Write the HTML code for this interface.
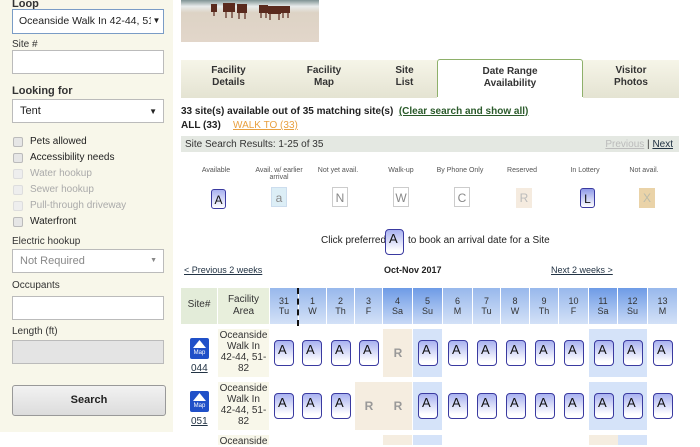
<!DOCTYPE html>
<html><head><meta charset="utf-8"><style>
*{box-sizing:border-box;margin:0;padding:0}
body{width:700px;height:440px;overflow:hidden;background:#fff;font-family:"Liberation Sans",Arial,sans-serif;font-size:11px;color:#222;position:relative}
.a{position:absolute}
#left{left:0;top:0;width:173px;height:432px;background:#f8f7ea}
.lbl{position:absolute;left:12px;font-size:10px;color:#333}
.inp{position:absolute;left:12px;width:152px;height:24px;background:#fff;border:1px solid #bbb;white-space:nowrap;overflow:hidden}
.cb{position:absolute;left:13px;width:10px;height:10px;border:1px solid #bbb;background:#e6e6e6;border-radius:2px}
.ct{position:absolute;left:30px;font-size:10px}
.tab{position:absolute;top:60px;height:38px;background:linear-gradient(#f6f5e8,#e4e3d2);text-align:center;font-weight:bold;font-size:10px;color:#333;line-height:12px;padding-top:5px}
.hd{position:absolute;top:288px;height:36px;text-align:center;font-size:9px;line-height:10px;padding-top:8px;color:#333;background:linear-gradient(#98b8ec,#d3e1f7)}
.we{background:linear-gradient(#6e9be6,#c8d9f6)}
.btn{position:absolute;width:20px;height:26px;border:1px solid #3a3aa0;border-radius:4px;background:linear-gradient(#a9b2f0,#fff 85%);font-size:13px;padding-left:3px;line-height:17px;color:#111}
.R{position:absolute;width:20px;text-align:center;color:#999;font-weight:bold;font-size:12px}
.bg{position:absolute}
.lg{position:absolute;font-size:7px;color:#555;text-align:center;width:60px}
.lb{position:absolute;width:16px;height:20px;text-align:center;line-height:20px;font-size:12px;color:#888}
</style></head><body>
<div id="left" class="a">
<div class="lbl" style="top:-2px;font-weight:bold;font-size:11px">Loop</div>
<div class="inp" style="top:9px;height:25px;border-color:#7a9cc6;font-size:10.5px;padding:5px 14px 0 6px">Oceanside Walk In 42-44, 51<span style="position:absolute;right:1px;top:3px;width:11px;height:16px;background:#fff;font-size:8px;line-height:16px;text-align:center">▼</span></div>
<div class="lbl" style="top:39px">Site #</div>
<div class="inp" style="top:50px"></div>
<div class="lbl" style="top:85px;font-weight:bold;font-size:11px">Looking for</div>
<div class="inp" style="top:99px;font-size:11px;padding:5px 0 0 7px">Tent<span style="position:absolute;right:6px;top:7px;font-size:8px">▼</span></div>
<div class="cb" style="top:137px"></div><div class="ct" style="top:136px">Pets allowed</div>
<div class="cb" style="top:153px"></div><div class="ct" style="top:152px">Accessibility needs</div>
<div class="cb" style="top:169px;background:#eee;border-color:#ddd"></div><div class="ct" style="top:168px;color:#aaa">Water hookup</div>
<div class="cb" style="top:185px;background:#eee;border-color:#ddd"></div><div class="ct" style="top:184px;color:#aaa">Sewer hookup</div>
<div class="cb" style="top:201px;background:#eee;border-color:#ddd"></div><div class="ct" style="top:200px;color:#aaa">Pull-through driveway</div>
<div class="cb" style="top:217px"></div><div class="ct" style="top:216px">Waterfront</div>
<div class="lbl" style="top:236px">Electric hookup</div>
<div class="inp" style="top:249px;font-size:11px;color:#888;padding:5px 0 0 7px">Not Required<span style="position:absolute;right:6px;top:7px;font-size:7px">▼</span></div>
<div class="lbl" style="top:280px">Occupants</div>
<div class="inp" style="top:296px"></div>
<div class="lbl" style="top:326px">Length (ft)</div>
<div class="inp" style="top:340px;background:#e4e4e4"></div>
<div class="inp" style="top:385px;height:31px;width:154px;border-radius:3px;border-color:#999;background:linear-gradient(#f2f2f2,#dcdcdc);text-align:center;font-weight:bold;font-size:11px;line-height:29px">Search</div>
</div>

<svg class="a" style="left:181px;top:0" width="138" height="42"><defs><linearGradient id="s" x1="0" y1="0" x2="0" y2="1"><stop offset="0" stop-color="#7e9293"/><stop offset=".15" stop-color="#e8ecec"/><stop offset=".3" stop-color="#ddd3c5"/><stop offset="1" stop-color="#e2d6ca"/></linearGradient></defs><rect width="138" height="42" fill="url(#s)"/>
<g fill="#5a2a1e"><rect x="30" y="4" width="6" height="8"/><rect x="42" y="3" width="12" height="9"/><rect x="56" y="4" width="10" height="9"/><rect x="78" y="5" width="9" height="8"/><rect x="87" y="6" width="13" height="8"/><rect x="100" y="6" width="9" height="7"/></g>
<g stroke="#5a2a1e" stroke-width="1.2"><path d="M33 12v4M45 12v6M51 12v6M58 13v6M64 13v6M80 13v5M85 13v5M89 14v6M98 14v6M102 13v5M107 13v5"/></g></svg>

<div class="tab" style="left:181px;width:95px">Facility<br>Details</div>
<div class="tab" style="left:276px;width:96px">Facility<br>Map</div>
<div class="tab" style="left:372px;width:65px">Site<br>List</div>
<div class="tab" style="left:437px;width:146px;background:#fff;border:1px solid #8eb06a;border-bottom:none;border-radius:3px 3px 0 0;top:59px;padding-top:6px">Date Range<br>Availability</div>
<div class="tab" style="left:583px;width:96px">Visitor<br>Photos</div>

<div class="a" style="left:181px;top:106px;font-weight:bold;font-size:10px">33 site(s) available out of 35 matching site(s) &nbsp;<span style="color:#2a5a2a;text-decoration:underline">(Clear search and show all)</span></div>
<div class="a" style="left:181px;top:120px;font-weight:bold;font-size:10px">ALL (33)</div>
<div class="a" style="left:233px;top:120px;font-size:10px;color:#e8a040;text-decoration:underline">WALK TO (33)</div>
<div class="a" style="left:181px;top:136px;width:498px;height:16px;background:#e4e8e2;font-size:10px;padding:3px 0 0 4px;color:#333">Site Search Results: 1-25 of 35<span style="position:absolute;right:6px;top:3px"><span style="color:#bbb;text-decoration:underline">Previous</span> | <span style="color:#234;text-decoration:underline">Next</span></span></div>

<div class="lg" style="left:186px;top:167px">Available</div>
<div class="lg" style="left:249px;top:167px">Avail. w/ earlier<br>arrival</div>
<div class="lg" style="left:308px;top:167px">Not yet avail.</div>
<div class="lg" style="left:371px;top:167px">Walk-up</div>
<div class="lg" style="left:430px;top:167px">By Phone Only</div>
<div class="lg" style="left:492px;top:167px">Reserved</div>
<div class="lg" style="left:555px;top:167px">In Lottery</div>
<div class="lg" style="left:614px;top:167px">Not avail.</div>
<div class="lb" style="left:211px;top:189px;border:1px solid #3a3aa0;border-radius:3px;background:linear-gradient(#a9b2f0,#fff);color:#111;width:15px">A</div>
<div class="lb" style="left:271px;top:187px;background:#dceef6;border:1px solid #cde">a</div>
<div class="lb" style="left:332px;top:187px;border:1px solid #ccc">N</div>
<div class="lb" style="left:393px;top:187px;border:1px solid #ccc">W</div>
<div class="lb" style="left:454px;top:187px;border:1px solid #ccc">C</div>
<div class="lb" style="left:516px;top:188px;background:#f5ebdf;color:#bbb">R</div>
<div class="lb" style="left:580px;top:188px;border:1px solid #3a3aa0;border-radius:3px;background:linear-gradient(#8f9ae8,#fff);color:#111;width:15px">L</div>
<div class="lb" style="left:639px;top:188px;background:#ead3a8;color:#bba">X</div>

<div class="a" style="left:321px;top:235px;font-size:10px">Click preferred</div>
<div class="btn" style="left:385px;top:229px;width:19px;height:26px">A</div>
<div class="a" style="left:408px;top:235px;font-size:10px">to book an arrival date for a Site</div>

<div class="a" style="left:184px;top:265px;font-size:9px;color:#234;text-decoration:underline">&lt; Previous 2 weeks</div>
<div class="a" style="left:384px;top:265px;font-size:9px;font-weight:bold">Oct-Nov 2017</div>
<div class="a" style="left:551px;top:265px;font-size:9px;color:#234;text-decoration:underline">Next 2 weeks &gt;</div>

<div class="hd" style="left:181px;width:36px;background:#e3ecd9;padding-top:12px;font-size:10px">Site#</div>
<div class="hd" style="left:218px;width:51px;background:#e8efdc;font-size:10px;line-height:12px;padding-top:6px">Facility<br>Area</div>
<div class="hd" style="left:270px;width:28px">31<br>Tu</div>
<div class="a" style="left:297px;top:288px;height:38px;border-left:2px dashed #111"></div>
<div class="hd" style="left:299px;width:27px">1<br>W</div>
<div class="hd" style="left:327px;width:27px">2<br>Th</div>
<div class="hd" style="left:355px;width:27px">3<br>F</div>
<div class="hd we" style="left:383px;width:29px">4<br>Sa</div>
<div class="hd we" style="left:413px;width:29px">5<br>Su</div>
<div class="hd" style="left:443px;width:29px">6<br>M</div>
<div class="hd" style="left:473px;width:27px">7<br>Tu</div>
<div class="hd" style="left:501px;width:28px">8<br>W</div>
<div class="hd" style="left:530px;width:28px">9<br>Th</div>
<div class="hd" style="left:559px;width:29px">10<br>F</div>
<div class="hd we" style="left:589px;width:28px">11<br>Sa</div>
<div class="hd we" style="left:618px;width:29px">12<br>Su</div>
<div class="hd" style="left:648px;width:29px">13<br>M</div>

<div class="bg" style="left:218px;top:329px;width:51px;height:48px;background:#f8f7ea"></div>
<div class="bg" style="left:218px;top:382px;width:51px;height:48px;background:#f8f7ea"></div>
<div class="bg" style="left:218px;top:435px;width:51px;height:10px;background:#f8f7ea"></div>
<div class="bg" style="left:383px;top:329px;width:29px;height:48px;background:#f5ede0"></div>
<div class="bg" style="left:413px;top:329px;width:29px;height:48px;background:#d5e3f9"></div>
<div class="bg" style="left:589px;top:329px;width:58px;height:48px;background:#d5e3f9"></div>
<div class="bg" style="left:355px;top:382px;width:57px;height:48px;background:#f5ede0"></div>
<div class="bg" style="left:413px;top:382px;width:29px;height:48px;background:#d5e3f9"></div>
<div class="bg" style="left:589px;top:382px;width:58px;height:48px;background:#d5e3f9"></div>
<div class="bg" style="left:383px;top:435px;width:29px;height:10px;background:#f5ede0"></div>
<div class="bg" style="left:413px;top:435px;width:29px;height:10px;background:#d5e3f9"></div>
<div class="bg" style="left:589px;top:435px;width:29px;height:10px;background:#f5ede0"></div>
<div class="bg" style="left:618px;top:435px;width:29px;height:10px;background:#d5e3f9"></div>

<div class="a" style="left:190px;top:338px;width:19px;height:21px;background:#2050c8;border-radius:2px;color:#fff;font-size:6px;text-align:center;padding-top:12px">Map<svg class="a" style="left:3px;top:2px" width="13" height="9"><path d="M6.5 0 L13 8 L0 8Z" fill="#fff"/></svg></div>
<div class="a" style="left:191px;top:363px;font-size:10px;color:#234;text-decoration:underline">044</div>
<div class="a" style="left:190px;top:391px;width:19px;height:21px;background:#2050c8;border-radius:2px;color:#fff;font-size:6px;text-align:center;padding-top:12px">Map<svg class="a" style="left:3px;top:2px" width="13" height="9"><path d="M6.5 0 L13 8 L0 8Z" fill="#fff"/></svg></div>
<div class="a" style="left:191px;top:416px;font-size:10px;color:#234;text-decoration:underline">051</div>
<div class="a" style="left:218px;top:330px;width:51px;text-align:center;font-size:10px;line-height:11px;color:#333">Oceanside<br>Walk In<br>42-44, 51-<br>82</div>
<div class="a" style="left:218px;top:383px;width:51px;text-align:center;font-size:10px;line-height:11px;color:#333">Oceanside<br>Walk In<br>42-44, 51-<br>82</div>
<div class="a" style="left:218px;top:436px;width:51px;text-align:center;font-size:10px;line-height:11px;color:#333">Oceanside</div>

<div class="btn" style="left:274px;top:340px">A</div>
<div class="btn" style="left:302px;top:340px">A</div>
<div class="btn" style="left:331px;top:340px">A</div>
<div class="btn" style="left:359px;top:340px">A</div>
<div class="R" style="left:388px;top:346px">R</div>
<div class="btn" style="left:418px;top:340px">A</div>
<div class="btn" style="left:448px;top:340px">A</div>
<div class="btn" style="left:477px;top:340px">A</div>
<div class="btn" style="left:506px;top:340px">A</div>
<div class="btn" style="left:535px;top:340px">A</div>
<div class="btn" style="left:564px;top:340px">A</div>
<div class="btn" style="left:594px;top:340px">A</div>
<div class="btn" style="left:623px;top:340px">A</div>
<div class="btn" style="left:653px;top:340px">A</div>
<div class="btn" style="left:274px;top:393px">A</div>
<div class="btn" style="left:302px;top:393px">A</div>
<div class="btn" style="left:331px;top:393px">A</div>
<div class="R" style="left:359px;top:399px">R</div>
<div class="R" style="left:388px;top:399px">R</div>
<div class="btn" style="left:418px;top:393px">A</div>
<div class="btn" style="left:448px;top:393px">A</div>
<div class="btn" style="left:477px;top:393px">A</div>
<div class="btn" style="left:506px;top:393px">A</div>
<div class="btn" style="left:535px;top:393px">A</div>
<div class="btn" style="left:564px;top:393px">A</div>
<div class="btn" style="left:594px;top:393px">A</div>
<div class="btn" style="left:623px;top:393px">A</div>
<div class="btn" style="left:653px;top:393px">A</div>
</body></html>
